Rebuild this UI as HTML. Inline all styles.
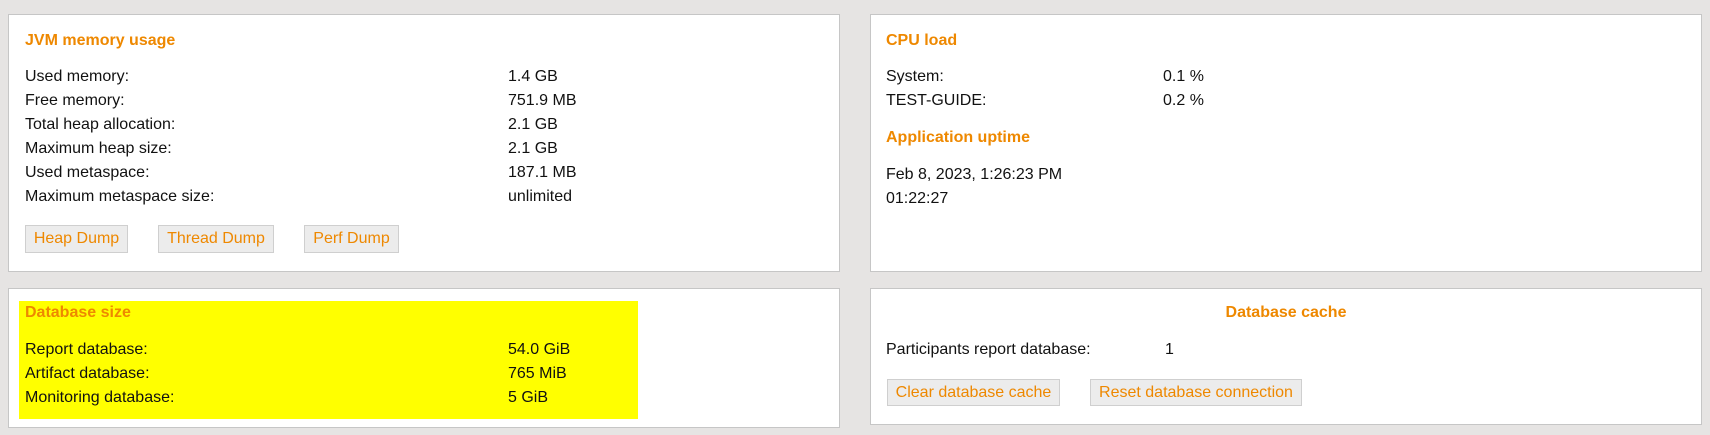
<!DOCTYPE html>
<html><head><style>
body{margin:0;width:1710px;height:435px;background:#e6e4e3;font-family:"Liberation Sans",Arial,sans-serif;font-size:16px;color:#111;position:relative;overflow:hidden}
.p{position:absolute;background:#fff;border:1px solid #c6c6c6;box-sizing:border-box}
.t{position:absolute;color:#ee8800;font-weight:bold;font-size:16px;line-height:20px}
.r{position:absolute;line-height:24px;white-space:nowrap}
.b{position:absolute;background:#ececec;border:1px solid #cfcfcf;box-sizing:border-box;color:#ee8800;text-align:center;font-size:16px;line-height:26px}
</style></head><body>
<div class="p" style="left:8px;top:14px;width:832px;height:258px"></div>
<div class="p" style="left:870px;top:14px;width:832px;height:258px"></div>
<div class="p" style="left:8px;top:288px;width:832px;height:140px"></div>
<div class="p" style="left:870px;top:288px;width:832px;height:137px"></div>
<div style="position:absolute;left:19px;top:301px;width:619px;height:118px;background:#ffff00"></div>

<div class="t" style="left:25px;top:31px">JVM memory usage</div>
<div class="r" style="left:25px;top:65px">Used memory:<br>Free memory:<br>Total heap allocation:<br>Maximum heap size:<br>Used metaspace:<br>Maximum metaspace size:</div>
<div class="r" style="left:508px;top:65px">1.4 GB<br>751.9 MB<br>2.1 GB<br>2.1 GB<br>187.1 MB<br>unlimited</div>
<div class="b" style="left:25px;top:225px;width:103px;height:28px">Heap Dump</div>
<div class="b" style="left:158px;top:225px;width:116px;height:28px">Thread Dump</div>
<div class="b" style="left:304px;top:225px;width:95px;height:28px">Perf Dump</div>

<div class="t" style="left:25px;top:303px">Database size</div>
<div class="r" style="left:25px;top:338px">Report database:<br>Artifact database:<br>Monitoring database:</div>
<div class="r" style="left:508px;top:338px">54.0 GiB<br>765 MiB<br>5 GiB</div>

<div class="t" style="left:886px;top:31px">CPU load</div>
<div class="r" style="left:886px;top:65px">System:<br>TEST-GUIDE:</div>
<div class="r" style="left:1163px;top:65px">0.1 %<br>0.2 %</div>
<div class="t" style="left:886px;top:128px">Application uptime</div>
<div class="r" style="left:886px;top:163px">Feb 8, 2023, 1:26:23 PM<br>01:22:27</div>

<div class="t" style="left:870px;width:832px;text-align:center;top:303px">Database cache</div>
<div class="r" style="left:886px;top:338px">Participants report database:</div>
<div class="r" style="left:1165px;top:338px">1</div>
<div class="b" style="left:887px;top:379px;width:173px;height:27px">Clear database cache</div>
<div class="b" style="left:1090px;top:379px;width:212px;height:27px">Reset database connection</div>
</body></html>
